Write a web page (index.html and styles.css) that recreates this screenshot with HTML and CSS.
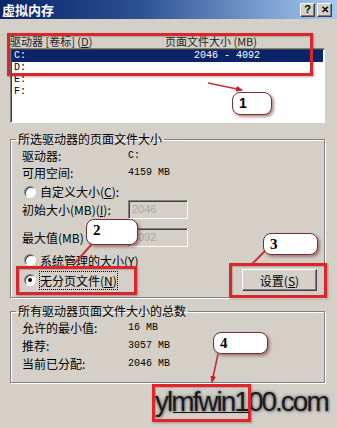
FILE: index.html
```html
<!DOCTYPE html>
<html lang="zh-CN">
<head>
<meta charset="utf-8">
<title>虚拟内存</title>
<link rel="stylesheet" href="styles.css">
</head>
<body>
<div class="window">
  <div class="titlebar">
    <span class="title">虚拟内存</span>
    <div class="tb-btns"><span class="tb-btn">?</span><span class="tb-btn x">✕</span></div>
  </div>
  <div class="content">
    <div class="list-head"><span class="col1">驱动器 [卷标] (<u>D</u>)</span><span class="col2">页面文件大小 (MB)</span></div>
    <div class="listbox">
      <div class="row sel"><span class="c1">C:</span><span class="c2">2046 - 4092</span></div>
      <div class="row"><span class="c1">D:</span></div>
      <div class="row"><span class="c1">E:</span></div>
      <div class="row"><span class="c1">F:</span></div>
    </div>

    <fieldset class="group g1">
      <legend>所选驱动器的页面文件大小</legend>
      <div class="kv first"><span class="k">驱动器:</span><span class="v">C:</span></div>
      <div class="kv"><span class="k">可用空间:</span><span class="v">4159 MB</span></div>
      <div class="radio-row r1"><span class="radio"></span><span class="rl">自定义大小(<u>C</u>):</span></div>
      <div class="kv input-row"><span class="k">初始大小(MB)(<u>I</u>):</span><span class="input">2046</span></div>
      <div class="kv input-row r-max"><span class="k">最大值(MB)</span><span class="input">4092</span></div>
      <div class="radio-row r2"><span class="radio"></span><span class="rl">系统管理的大小(<u>Y</u>)</span></div>
      <div class="last-row">
        <div class="radio-row"><span class="radio checked"></span><span class="rl focus">无分页文件(<u>N</u>)</span></div>
        <span class="button">设置(<u>S</u>)</span>
      </div>
    </fieldset>

    <fieldset class="group g2">
      <legend>所有驱动器页面文件大小的总数</legend>
      <div class="kv2"><span class="k">允许的最小值:</span><span class="v">16 MB</span></div>
      <div class="kv2"><span class="k">推荐:</span><span class="v">3057 MB</span></div>
      <div class="kv2"><span class="k">当前已分配:</span><span class="v">2046 MB</span></div>
    </fieldset>

    <div class="watermark">ylmfwin100.com</div>
  </div>

  <!-- annotations -->
  <div class="redbox rb1"></div>
  <div class="redbox rb2"></div>
  <div class="redbox rb3"></div>
  <div class="redbox rb4"></div>
  <div class="wm-underline"></div>

  <svg class="arrows" width="337" height="428" viewBox="0 0 337 428">
    <defs>
      <marker id="ah" markerWidth="8" markerHeight="8" refX="6" refY="4" orient="auto" markerUnits="userSpaceOnUse">
        <path d="M0,1 L7,4 L0,7 Z" fill="#d0202a"/>
      </marker>
    </defs>
    <line x1="208" y1="83" x2="242" y2="90" stroke="#b8343a" stroke-width="1.6" marker-end="url(#ah)"/>
    <line x1="92" y1="244" x2="74" y2="264" stroke="#c8323a" stroke-width="2"/>
    <line x1="265" y1="251" x2="251" y2="265" stroke="#c8323a" stroke-width="2"/>
    <line x1="218" y1="354" x2="212" y2="382" stroke="#b8343a" stroke-width="1.6" marker-end="url(#ah)"/>
  </svg>

  <div class="callout c-1">1</div>
  <div class="callout c-2">2</div>
  <div class="callout c-3">3</div>
  <div class="callout c-4">4</div>
</div>
</body>
</html>
```

FILE: styles.css
```css
* { box-sizing: border-box; margin: 0; padding: 0; }
html, body { width: 337px; height: 428px; overflow: hidden; }
body {
  background: #d4d0c8;
  font-family: "Noto Sans CJK SC", sans-serif;
  font-size: 12px;
  color: #000;
}
u { text-decoration: underline; }

.window { position: relative; width: 337px; height: 428px; background: #d4d0c8; }

.titlebar {
  height: 19px;
  background: linear-gradient(to right, #0a246a 0%, #2a4f92 40%, #a6caf0 100%);
  display: flex;
  align-items: center;
  justify-content: space-between;
  padding: 0 5px 0 2px;
}
.title { color: #fff; font-weight: bold; font-size: 13px; line-height: 19px; }
.tb-btns { display: flex; gap: 2px; }
.tb-btn {
  width: 15px; height: 14px;
  background: #d4d0c8;
  border: 1px solid;
  border-color: #fff #404040 #404040 #fff;
  box-shadow: inset -1px -1px 0 #808080;
  font: bold 11px "Liberation Sans", sans-serif;
  display: flex; align-items: center; justify-content: center;
  line-height: 1;
}
.tb-btn.x { font-size: 10px; }

.content { padding: 15px 12px 0 10px; }

.list-head { display: flex; height: 14px; line-height: 14px; font-size: 11px; color: #222; }
.list-head .col1 { width: 155px; }

.listbox {
  height: 75px;
  background: #fff;
  border: 1px solid;
  border-color: #808080 #fff #fff #808080;
  box-shadow: inset 1px 1px 0 #404040;
  padding: 1px 1px 0 1px;
}
.row {
  display: flex;
  height: 12px;
  line-height: 12px;
  font: 10px "Liberation Mono", monospace;
  padding-left: 2px;
}
.row .c1 { width: 180px; }
.row.sel { background: #0a246a; color: #fff; }

.group {
  border: 1px solid #808080;
  box-shadow: 1px 1px 0 #fff, inset 1px 1px 0 #fff;
  padding: 0 7px 6px 11px;
}
.group legend {
  margin-left: -6px;
  padding: 0 2px;
  height: 14px;
  line-height: 14px;
}
.g1 { margin-top: 9px; }
.g2 { margin-top: 6px; padding-bottom: 10px; }

.kv { display: flex; align-items: center; height: 17px; }
.kv.first { margin-top: 1px; }
.k { width: 106px; flex: none; }
.v { font: 10px "Liberation Mono", monospace; }

.radio-row { display: flex; align-items: center; height: 17px; padding-left: 2px; gap: 4px; }
.r1 { margin-top: 2px; }
.r2 { height: 18px; margin-top: 4px; }
.radio {
  width: 12px; height: 12px;
  border-radius: 50%;
  background: #fff;
  border: 1px solid;
  border-color: #808080 #fff #fff #808080;
  box-shadow: inset 1px 1px 0 #404040;
  display: flex; align-items: center; justify-content: center;
  flex: none;
}
.radio.checked::after {
  content: "";
  width: 4px; height: 4px;
  border-radius: 50%;
  background: #000;
}
.rl.focus { outline: 1px dotted #000; outline-offset: 0; }

.input-row { height: 19px; }
.r-max { margin-top: 9px; }
.input {
  width: 60px; height: 19px;
  border: 1px solid;
  border-color: #808080 #fff #fff #808080;
  box-shadow: inset 1px 1px 0 #404040;
  background: #d4d0c8;
  color: #a8a8a8;
  font: 11px "Liberation Sans", sans-serif;
  line-height: 17px;
  padding-left: 3px;
}

.last-row { display: flex; align-items: center; justify-content: space-between; height: 22px; }
.button {
  width: 75px; height: 22px;
  border: 1px solid;
  border-color: #fff #404040 #404040 #fff;
  box-shadow: inset -1px -1px 0 #808080;
  display: flex; align-items: center; justify-content: center;
  background: #d4d0c8;
}

.kv2 { display: flex; align-items: center; height: 18px; }

.watermark {
  margin: 3px 0 0 145px;
  height: 36px;
  line-height: 36px;
  font: 28px "Liberation Sans", sans-serif;
  letter-spacing: -2px;
  color: #1a1a1a;
  text-shadow: 0 0 2px #8c8c8c, 0 0 3px #9a9a9a, 0 0 4px #a0a0a0, 1px 1px 2px #888;
}

/* annotations */
.redbox {
  position: absolute;
  border: 3px solid #d8262c;
  box-shadow: 1px 1px 2px rgba(80, 0, 0, 0.35), inset 1px 1px 1px rgba(80, 0, 0, 0.2);
}
.rb1 { left: 7px; top: 33px; width: 306px; height: 43px; }
.rb2 { left: 16px; top: 266px; width: 121px; height: 29px; }
.rb3 { left: 229px; top: 263px; width: 98px; height: 35px; }
.rb4 { left: 152px; top: 384px; width: 99px; height: 38px; border-color: #e0262c; }
.wm-underline { position: absolute; left: 173px; top: 412px; width: 76px; height: 1px; background: #111; }

.arrows { position: absolute; left: 0; top: 0; }

.callout {
  position: absolute;
  background: #fff;
  border: 1.5px solid #6e3236;
  border-radius: 8px;
  box-shadow: 2px 2px 3px rgba(120, 50, 50, 0.55);
  font: bold 15px "Liberation Serif", serif;
  line-height: 18px;
  padding: 1px 0 0 6px;
}
.c-1 { left: 232px; top: 92px; width: 40px; height: 23px; font-family: "Liberation Sans", sans-serif; font-size: 14px; }
.c-2 { left: 86px; top: 219px; width: 52px; height: 26px; }
.c-3 { left: 263px; top: 233px; width: 55px; height: 22px; }
.c-4 { left: 213px; top: 332px; width: 55px; height: 22px; }
```
